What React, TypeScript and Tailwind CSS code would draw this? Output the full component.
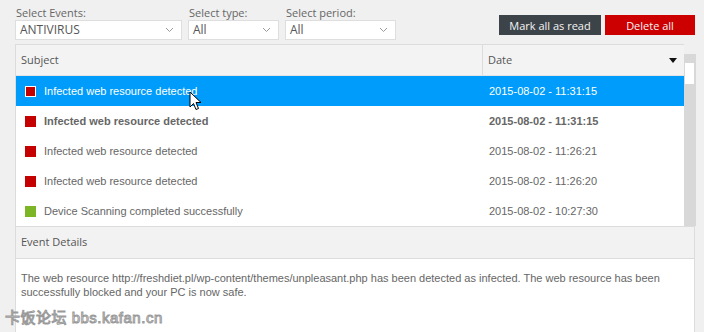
import React from 'react';

const ROWS = [
  { subject: 'Infected web resource detected', date: '2015-08-02 - 11:31:15', color: 'bg-[#c40000]', selected: true, bold: false },
  { subject: 'Infected web resource detected', date: '2015-08-02 - 11:31:15', color: 'bg-[#c40000]', selected: false, bold: true },
  { subject: 'Infected web resource detected', date: '2015-08-02 - 11:26:21', color: 'bg-[#c40000]', selected: false, bold: false },
  { subject: 'Infected web resource detected', date: '2015-08-02 - 11:26:20', color: 'bg-[#c40000]', selected: false, bold: false },
  { subject: 'Device Scanning completed successfully', date: '2015-08-02 - 10:27:30', color: 'bg-[#7cb526]', selected: false, bold: false },
];

const Chevron = () => (
  <svg width="9" height="6" viewBox="0 0 9 6" className="shrink-0">
    <path d="M1 1 L4.5 4.5 L8 1" fill="none" stroke="#9a9a9a" strokeWidth="1" />
  </svg>
);

const Select: React.FC<{ label: string; value: string; width: string }> = ({ label, value, width }) => (
  <div className={`flex flex-col ${width}`}>
    <span className="text-[11px] leading-[13px] text-[#666] pl-px">{label}</span>
    <div className="mt-[1px] h-[20px] bg-white border border-[#dedede] flex items-center justify-between pl-[4px] pr-[7px]">
      <span className="text-[12px] text-[#555]">{value}</span>
      <Chevron />
    </div>
  </div>
);

const App: React.FC = () => {
  return (
    <div className="relative w-[704px] h-[332px] overflow-hidden bg-[#f0f0f0] font-['Open_Sans',sans-serif]">
      {/* filters + actions */}
      <div className="flex items-start pl-[15px] pr-[9px] pt-[6px]">
        <div className="flex gap-[6px]">
          <Select label="Select Events:" value="ANTIVIRUS" width="w-[167px]" />
          <Select label="Select type:" value="All" width="w-[91px]" />
          <Select label="Select period:" value="All" width="w-[111px]" />
        </div>
        <div className="ml-auto mt-[9px] flex gap-[4px]">
          <button className="h-[20px] w-[102px] bg-[#3d4449] text-[#f4f4f4] text-[11px] leading-none">Mark all as read</button>
          <button className="h-[20px] w-[90px] bg-[#cc0000] text-[#f4f4f4] text-[11px] leading-none">Delete all</button>
        </div>
      </div>

      <div className="ml-[15px] mt-[4px] w-[681px]">
        {/* events list */}
        <div className="flex">
          <div className="w-[669px] bg-white border-l border-t border-[#dcdcdc]">
            <div className="flex h-[31px] bg-[#f3f3f3] border-b border-[#e4e4e4] text-[11px] text-[#555]">
              <div className="w-[467px] flex items-center pl-[5px] border-r border-[#dcdcdc]">Subject</div>
              <div className="flex-1 flex items-center justify-between pl-[5px] pr-[7px]">
                <span>Date</span>
                <svg width="8" height="5" viewBox="0 0 8 5"><path d="M0 0 H8 L4 5 Z" fill="#111" /></svg>
              </div>
            </div>
            <div className="font-['Liberation_Sans',Arial,sans-serif] text-[11px]">
              {ROWS.map((r, i) => (
                <div
                  key={i}
                  className={`flex h-[30px] items-center ${r.selected ? 'bg-[#009cfc] text-white' : 'text-[#666]'} ${r.bold ? 'font-bold text-[#555]' : ''}`}
                >
                  <div className="w-[468px] flex items-center pl-[9px]">
                    <span className={`w-[11px] h-[11px] ${r.color} ${r.selected ? 'border border-white' : ''}`} />
                    <span className="ml-[8px]">{r.subject}</span>
                  </div>
                  <div className="pl-[5px]">{r.date}</div>
                </div>
              ))}
            </div>
          </div>
          {/* scrollbar */}
          <div className="w-[12px] flex flex-col">
            <div className="h-[10px]" />
            <div className="flex-1 bg-[#d8d8d8] pt-[9px] pl-[1px] pr-[2px]">
              <div className="h-[21px] bg-white" />
            </div>
          </div>
        </div>

        {/* event details */}
        <div className="w-[680px] border border-[#dcdcdc] bg-white">
          <div className="h-[32px] bg-[#f2f2f2] border-b border-[#dcdcdc] flex items-center pl-[5px] text-[11px] text-[#555]">
            Event Details
          </div>
          <p className="px-[5px] pt-[12px] font-['Liberation_Sans',Arial,sans-serif] text-[11px] leading-[14px] text-[#666] h-[80px]">
            The web resource http://freshdiet.pl/wp-content/themes/unpleasant.php has been detected as infected. The web resource has been successfully blocked and your PC is now safe.
          </p>
        </div>
      </div>

      {/* mouse cursor */}
      <svg className="absolute left-[189px] top-[91px]" width="13" height="20" viewBox="0 0 13 20">
        <path d="M1 1 L1 16 L4.5 12.5 L7 18.5 L9.5 17.5 L7 11.5 L12 11.5 Z" fill="#fff" stroke="#000" strokeWidth="1" strokeLinejoin="round" />
      </svg>

      {/* forum watermark */}
      <div className="absolute left-[5px] top-[310px] text-[15px] leading-none text-white [-webkit-text-stroke:1px_#9a9a9a] font-['Liberation_Sans','Noto_Sans_CJK_SC',sans-serif] tracking-[0.5px]">
        卡饭论坛 bbs.kafan.cn
      </div>
    </div>
  );
};

export default App;
